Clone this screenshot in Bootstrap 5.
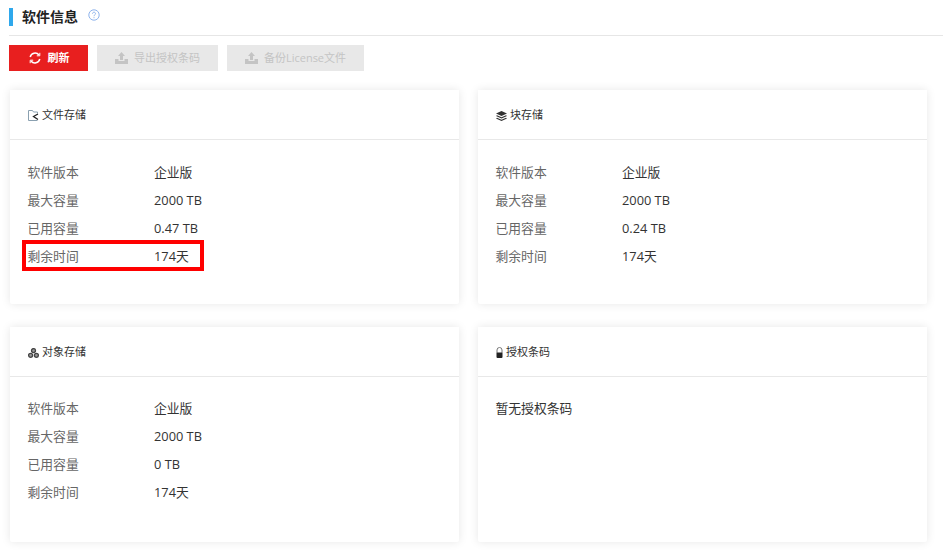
<!DOCTYPE html>
<html lang="zh-CN">
<head>
    <meta charset="UTF-8">
    <title>软件信息</title>
    <link href="https://cdn.jsdelivr.net/npm/bootstrap@5.3.0/dist/css/bootstrap.min.css" rel="stylesheet">
    <style>
        body { font-family: "Open Sans", "Noto Sans CJK SC", sans-serif; background: #fff; color: #333; }
        .page-wrap { padding: 8px 0 8px 9px; }
        .page-head { height: 28px; border-bottom: 1px solid #e6e6e6; padding-bottom: 10px; }
        .head-bar { width: 4px; height: 18px; background: #2fa8ec; }
        .head-title { font-size: 14px; font-weight: 700; color: #222; margin-left: 9px; line-height: 18px; }
        .head-help { margin-left: 10px; margin-bottom: 3px; }
        .tool-row { margin-top: 9px; gap: 9px; }
        .tool-btn { height: 26px; font-size: 11px; line-height: 26px; border: 0; border-radius: 0; padding: 0; gap: 6px; }
        .tool-btn.btn-refresh { width: 79px; background: #e81f1f; color: #fff; font-weight: 700; gap: 7px; padding-left: 1px; }
        .tool-btn.btn-off, .tool-btn.btn-off:disabled { background: #e8e8e8; color: #c4c4c4; opacity: 1; }
        .btn-export { width: 121px; }
        .btn-backup { width: 137px; }
        .card-grid { display: grid; grid-template-columns: 449px 449px; column-gap: 19px; row-gap: 23px; margin: 19px 0 0 1px; }
        .info-card { height: 214px; border: 0; border-radius: 2px; box-shadow: 0 0 10px rgba(0,0,0,.1); }
        .info-card.low { height: 215px; }
        .info-head { height: 50px; padding: 2px 0 0 18px; background: #fff; border-bottom: 1px solid #e8e8e8; font-size: 11px; color: #333; gap: 3px; }
        .info-body { padding: 18px 18px 0 17.500px; font-size: 12.800px; }
        .low .info-body { padding-top: 17px; }
        .info-row { height: 28px; line-height: 28px; display: flex; }
        .info-key { width: 126.500px; color: #666; }
        .info-val { color: #333; }
        .mark-box { position: absolute; left: 12px; top: 150px; width: 182px; height: 31px; border: 4px solid #f00; }
        .empty-code { color: #333; line-height: 28px; }
    </style>
</head>
<body>

<div class="page-wrap">
    <div class="page-head d-flex align-items-center">
        <span class="head-bar"></span>
        <span class="head-title">软件信息</span>
        <svg class="head-help" width="12" height="12" viewBox="0 0 12 12" fill="none" stroke="#8fb4ec">
            <circle cx="6" cy="6" r="5.2"/>
            <path d="M4.5 4.7c0-2 3-2 3 0 0 1.200-1.500 1.100-1.500 2.500M6 8.200v1"/>
        </svg>
    </div>

    <div class="tool-row d-flex">
        <button class="btn tool-btn btn-refresh d-flex align-items-center justify-content-center">
            <svg width="12" height="12" viewBox="0 0 12 12" fill="none" stroke="#fff" stroke-width="1.500">
                <path d="M1.200 5A5 5 0 0 1 10 3M10.800 7A5 5 0 0 1 2 9"/>
                <path d="M10.800 .8v3h-3M1.200 11.200v-3h3" stroke-width="1"/>
            </svg>
            <span>刷新</span>
        </button>
        <button class="btn tool-btn btn-off btn-export d-flex align-items-center justify-content-center" disabled>
            <svg width="13" height="12" viewBox="0 0 13 12" fill="#c4c4c4">
                <path d="M6.500 0 10 4H8v4H5V4H3zM0 7h3.500v2h6V7H13v5H0z"/>
            </svg>
            <span>导出授权条码</span>
        </button>
        <button class="btn tool-btn btn-off btn-backup d-flex align-items-center justify-content-center" disabled>
            <svg width="13" height="12" viewBox="0 0 13 12" fill="#c4c4c4">
                <path d="M6.500 0 10 4H8v4H5V4H3zM0 7h3.500v2h6V7H13v5H0z"/>
            </svg>
            <span>备份License文件</span>
        </button>
    </div>

    <div class="card-grid">
        <div class="card info-card position-relative">
            <div class="info-head d-flex align-items-center">
                <svg width="11" height="11" viewBox="0 0 11 11" fill="none">
                    <path d="M.5 10.500V.5h4l1 1.500h4v1.500M.5 10.500h9" stroke="#8aa0b0"/>
                    <path d="M10 4 5.500 6.500l4.500 3" stroke="#222" stroke-width="1.300"/>
                </svg>
                <span>文件存储</span>
            </div>
            <div class="info-body">
                <div class="info-row"><span class="info-key">软件版本</span><span class="info-val">企业版</span></div>
                <div class="info-row"><span class="info-key">最大容量</span><span class="info-val">2000 TB</span></div>
                <div class="info-row"><span class="info-key">已用容量</span><span class="info-val">0.47 TB</span></div>
                <div class="info-row"><span class="info-key">剩余时间</span><span class="info-val">174天</span></div>
            </div>
            <div class="mark-box"></div>
        </div>

        <div class="card info-card">
            <div class="info-head d-flex align-items-center">
                <svg width="11" height="10" viewBox="0 0 11 10" fill="#333">
                    <path d="M5.500 0 11 2.500 5.500 5 0 2.500z"/>
                    <path d="M1 4.300 5.500 6.300 10 4.300 11 5 5.500 7.500 0 5zM1 6.800 5.500 8.800 10 6.800 11 7.500 5.500 10 0 7.500z"/>
                </svg>
                <span>块存储</span>
            </div>
            <div class="info-body">
                <div class="info-row"><span class="info-key">软件版本</span><span class="info-val">企业版</span></div>
                <div class="info-row"><span class="info-key">最大容量</span><span class="info-val">2000 TB</span></div>
                <div class="info-row"><span class="info-key">已用容量</span><span class="info-val">0.24 TB</span></div>
                <div class="info-row"><span class="info-key">剩余时间</span><span class="info-val">174天</span></div>
            </div>
        </div>

        <div class="card info-card low">
            <div class="info-head d-flex align-items-center">
                <svg width="11" height="10" viewBox="0 0 11 10" fill="#999" stroke="#444" stroke-width="1.300">
                    <circle cx="5.500" cy="2.600" r="2"/>
                    <circle cx="2.600" cy="7.300" r="2"/>
                    <circle cx="8.400" cy="7.300" r="2"/>
                </svg>
                <span>对象存储</span>
            </div>
            <div class="info-body">
                <div class="info-row"><span class="info-key">软件版本</span><span class="info-val">企业版</span></div>
                <div class="info-row"><span class="info-key">最大容量</span><span class="info-val">2000 TB</span></div>
                <div class="info-row"><span class="info-key">已用容量</span><span class="info-val">0 TB</span></div>
                <div class="info-row"><span class="info-key">剩余时间</span><span class="info-val">174天</span></div>
            </div>
        </div>

        <div class="card info-card low">
            <div class="info-head d-flex align-items-center">
                <svg width="7" height="11" viewBox="0 0 7 11">
                    <path d="M1 6V3a2.500 2.500 0 0 1 5 0v3" fill="none" stroke="#777"/>
                    <rect x="0.500" y="5.500" width="6" height="5.500" rx="1" fill="#222"/>
                </svg>
                <span>授权条码</span>
            </div>
            <div class="info-body">
                <div class="empty-code">暂无授权条码</div>
            </div>
        </div>
    </div>
</div>

<script src="https://cdn.jsdelivr.net/npm/bootstrap@5.3.0/dist/js/bootstrap.bundle.min.js"></script>
</body>
</html>
